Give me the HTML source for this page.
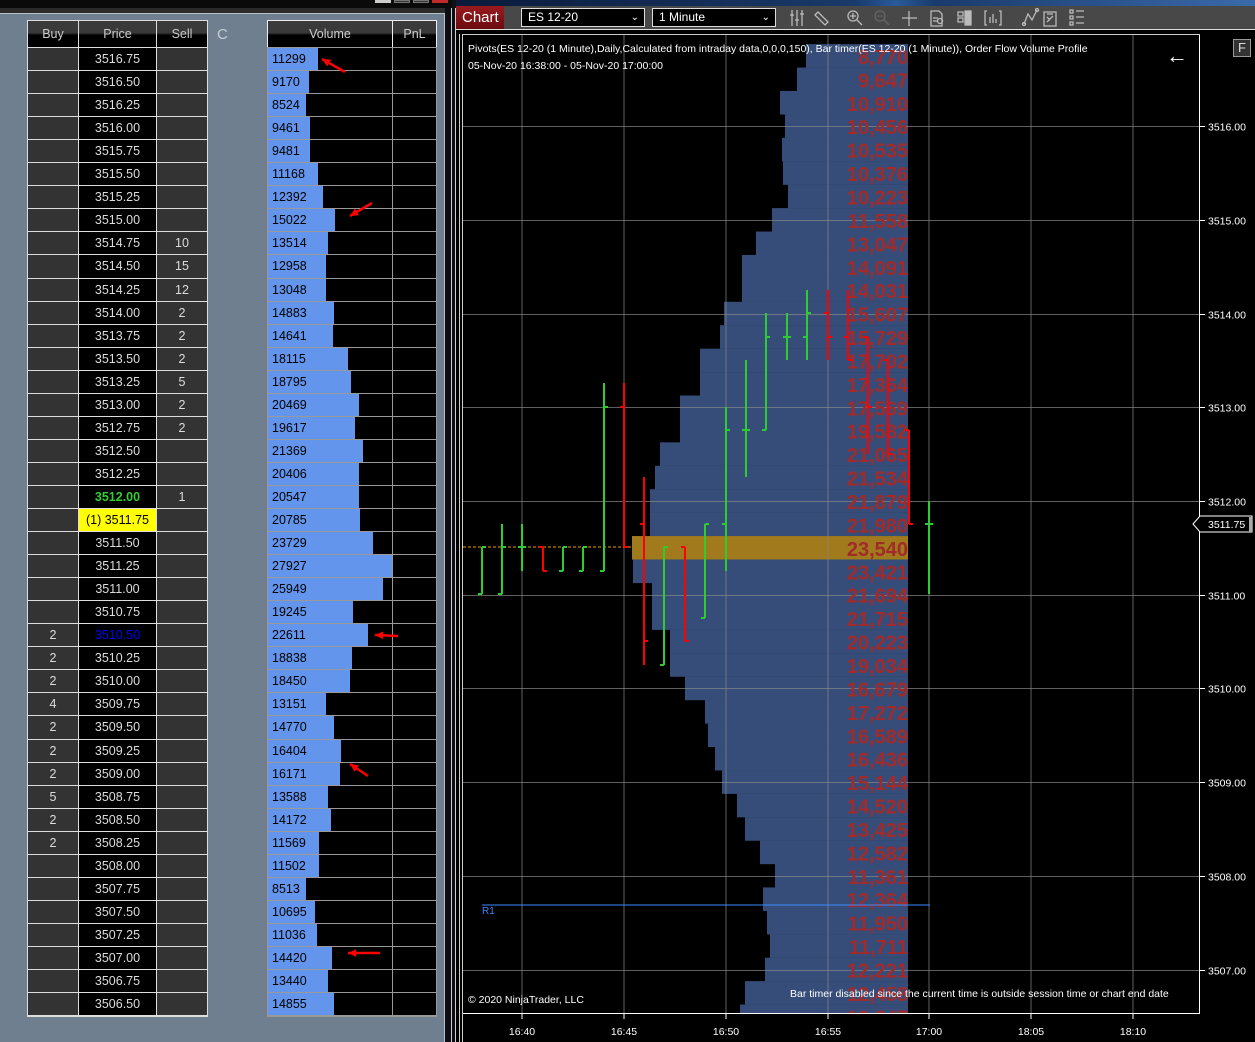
<!DOCTYPE html>
<html><head><meta charset="utf-8">
<style>
*{margin:0;padding:0;box-sizing:border-box}
body{width:1255px;height:1042px;overflow:hidden;background:#111;font-family:"Liberation Sans",Arial,sans-serif;position:relative}
.a{position:absolute}
.cell{position:absolute;font-size:12.5px;text-align:center;line-height:22px;color:#ddd}
</style></head><body>
<div class="a" style="left:0;top:0;width:452px;height:8px;background:#0a0a0a"></div>
<div class="a" style="left:375px;top:0;width:16px;height:3px;background:#ccc"></div>
<div class="a" style="left:394px;top:0;width:16px;height:3px;background:#333;border:1px solid #777"></div>
<div class="a" style="left:413px;top:0;width:16px;height:3px;background:#333;border:1px solid #777"></div>
<div class="a" style="left:432px;top:0;width:16px;height:3px;background:#c0282a"></div>
<div class="a" style="left:0;top:8px;width:452px;height:5px;background:#2b2b2b"></div>
<div class="a" style="left:0;top:13px;width:445px;height:1029px;background:#6f7f8f;border-top:1px solid #b8c0c8;border-right:1px solid #b8c0c8"></div>
<div class="a" style="left:445px;top:8px;width:10px;height:1034px;background:#0d0d14"></div>
<div class="a" style="left:451px;top:8px;width:1px;height:1034px;background:#ccc"></div>
<div class="a" style="left:455px;top:8px;width:1px;height:1034px;background:#ccc"></div>
<div class="a" style="left:217px;top:26px;font-size:15px;color:#c8ced4">C</div>
<div id="dom"></div>
<div class="a" style="left:456px;top:0;width:799px;height:6px;background:linear-gradient(90deg,#0a1a3a,#1a3a6a 50%,#2a5a9a 55%,#1a3a6a 60%,#3a6aaa)"></div>
<div class="a" style="left:456px;top:6px;width:799px;height:24px;background:#484848"></div>
<div class="a" style="left:456px;top:29px;width:799px;height:1px;background:#ddd"></div>
<div class="a" style="left:456px;top:6px;width:48px;height:23px;background:linear-gradient(#9a1a1e,#6a0c10);color:#fff;font-size:15px;line-height:23px;padding-left:6px">Chart</div>
<div class="a" style="left:521px;top:8px;width:124px;height:19px;border:1px solid #ddd;background:#000;color:#fff;font-size:12px;line-height:17px;padding-left:6px">ES 12-20<span style="position:absolute;right:5px;font-size:10px">&#8964;</span></div>
<div class="a" style="left:652px;top:8px;width:124px;height:19px;border:1px solid #ddd;background:#000;color:#fff;font-size:12px;line-height:17px;padding-left:6px">1 Minute<span style="position:absolute;right:5px;font-size:10px">&#8964;</span></div>
<svg class="a" style="left:780px;top:6px" width="320" height="24" fill="none" stroke="#bbb" stroke-width="1.3">
<path d="M12 4v16M17 4v16M22 4v16M10 9h4M15 14h4M20 8h4"/>
<path d="M38 6l10 10-3 3-10-10z M35 9l3-3"/>
<circle cx="73" cy="10" r="5"/><path d="M70 10h6M73 7v6M77 14l5 5"/>
<g stroke="#666"><circle cx="100" cy="10" r="5"/><path d="M97 10h6M104 14l5 5"/></g>
<path d="M129 5v15M122 12h15"/>
<path d="M151 5h8l3 3v12h-11z M153 12h5M153 15h4"/><circle cx="160" cy="15" r="2.5"/>
<path d="M178 6h5v4h-5zM178 12h5v4h-5z"/><rect x="185" y="5" width="6" height="14" fill="#bbb"/>
<path d="M207 5h-2v14h2M219 5h2v14h-2M210 17v-6M213 17v-9M216 17v-4"/>
<path d="M244 18l4-10 4 6 5-10"/><circle cx="244" cy="18" r="1.5"/><circle cx="257" cy="4" r="1.5"/>
<path d="M264 6h12v14h-12zM267 8h6M267 16l6-6M267 11l3 3"/>
<path d="M290 4h3v3h-3zM290 10h3v3h-3zM290 16h3v3h-3zM296 5h8M296 11h8M296 17h8"/>
</svg>
<div class="a" style="left:456px;top:30px;width:799px;height:1012px;background:#000"></div>
<div class="a" style="left:459px;top:34px;width:1px;height:1008px;background:#ccc"></div>
<div class="a" style="left:462px;top:34px;width:1px;height:1008px;background:#ccc"></div>
<div class="a" style="left:462px;top:34px;width:738px;height:1px;background:#ccc"></div>
<svg class="a" id="ch" style="left:0;top:0" width="1255" height="1042"></svg>
<div class="a" style="left:468px;top:41px;color:#fff;font-size:10.5px;line-height:17px;white-space:nowrap">Pivots(ES 12-20 (1 Minute),Daily,Calculated from intraday data,0,0,0,150), Bar timer(ES 12-20 (1 Minute)), Order Flow Volume Profile<br>05-Nov-20 16:38:00 - 05-Nov-20 17:00:00</div>
<div class="a" style="left:1166px;top:42px;color:#fff;font-size:22px;line-height:28px">&#8592;</div>
<div class="a" style="left:1233px;top:39px;width:18px;height:18px;border:1px solid #999;background:#333;color:#ddd;font-size:13px;text-align:center;line-height:16px">F</div>
<div class="a" style="left:482px;top:906px;color:#3a8aff;font-size:10px">R1</div>
<div class="a" style="left:468px;top:994px;color:#fff;font-size:10.5px">© 2020 NinjaTrader, LLC</div>
<div class="a" style="left:790px;top:988px;color:#fff;font-size:10.5px;white-space:nowrap">Bar timer disabled since the current time is outside session time or chart end date</div>
<script>
var vols=[11299,9170,8524,9461,9481,11168,12392,15022,13514,12958,13048,14883,14641,18115,18795,20469,19617,21369,20406,20547,20785,23729,27927,25949,19245,22611,18838,18450,13151,14770,16404,16171,13588,14172,11569,11502,8513,10695,11036,14420,13440,14855];
var sell={"3514.75":10,"3514.50":15,"3514.25":12,"3514.00":2,"3513.75":2,"3513.50":2,"3513.25":5,"3513.00":2,"3512.75":2,"3512.00":1};
var buy={"3510.50":2,"3510.25":2,"3510.00":2,"3509.75":4,"3509.50":2,"3509.25":2,"3509.00":2,"3508.75":5,"3508.50":2,"3508.25":2};
var h='';
function d(l,t,w,hh,bg,txt,st){h+='<div class="cell" style="left:'+l+'px;top:'+t+'px;width:'+w+'px;height:'+hh+'px;background:'+bg+';'+(st||'')+'">'+(txt||'')+'</div>';}
var hg='linear-gradient(#3a3a3a 0,#3a3a3a 45%,#000 55%)';
h+='<div class="a" style="left:27px;top:20px;width:181px;height:997px;background:#ddd"></div>';
h+='<div class="a" style="left:267px;top:20px;width:170px;height:997px;background:#999"></div>';
h+='<div class="a" style="left:267px;top:20px;width:170px;height:27px;background:#eee"></div>';
d(28,21,50,26,hg,'Buy','line-height:26px;color:#ccc');d(79,21,77,26,hg,'Price','line-height:26px;color:#ccc');d(157,21,50,26,hg,'Sell','line-height:26px;color:#ccc');
d(268,21,124,26,hg,'Volume','line-height:26px;color:#ccc');d(393,21,43,26,hg,'PnL','line-height:26px;color:#ccc');
for(var i=0;i<42;i++){var p=(3516.75-i*0.25).toFixed(2);var t=Math.round(48+i*23.05);var hh=Math.round(48+(i+1)*23.05)-t-1;
 d(28,t,50,hh,'#333',buy[p]||'');
 var bg='#000',st='',tx=p;
 if(p=='3512.00')st='color:#3c3;font-weight:bold';
 if(p=='3511.75'){bg='#ff0';st='color:#000';tx='(1) 3511.75';}
 if(p=='3510.50')st='color:#00f';
 d(79,t,77,hh,bg,tx,st);
 d(157,t,50,hh,'#333',sell[p]||'');
 d(268,t,124,hh,'#000','');
 var w=Math.round(vols[i]/27927*124);
 d(268,t,w,hh,'#6495ed',vols[i],'text-align:left;padding-left:4px;color:#000');
 d(393,t,43,hh,'#000','');
}
document.getElementById('dom').innerHTML=h;
var s='';
var C=document.getElementById('ch');
function arrow(x1,y1,x2,y2){var a=Math.atan2(y2-y1,x2-x1),L=9;
 s+='<line x1="'+x1+'" y1="'+y1+'" x2="'+x2+'" y2="'+y2+'" stroke="#f00" stroke-width="2.5"/>';
 s+='<polygon fill="#f00" points="'+x2+','+y2+' '+(x2-L*Math.cos(a-0.45))+','+(y2-L*Math.sin(a-0.45))+' '+(x2-L*Math.cos(a+0.45))+','+(y2-L*Math.sin(a+0.45))+'"/>';}
function Y(p){return 501-(p-3512)*93.7;}
var pv=[8770,9647,10910,10456,10535,10376,10223,11558,13047,14091,14031,15607,15729,17702,17364,17569,19582,21065,21534,21879,21980,23540,23421,21694,21715,20223,19034,16679,17272,16589,16436,15144,14520,13425,12582,11361,12364,11950,11711,12221,12458,10847];
var lx=[806,797,780,785,782,783,788,772,756,742,742,724,720,700,700,680,680,660,655,650,650,632,633,652,652,670,670,685,705,708,715,722,737,745,760,775,763,767,770,765,745,740];
s+='<defs><clipPath id="cp"><rect x="463" y="35" width="736" height="978"/></clipPath></defs><g clip-path="url(#cp)">';
for(i=0;i<42;i++){var y=Y(3516.75-i*0.25);
 s+='<rect x="'+lx[i]+'" y="'+(y-11.8)+'" width="'+(908-lx[i])+'" height="23.6" fill="'+(i==21?'#a07a1c':'#354d78')+'"/>';}
var gx=[522,624,726,828,929,1031,1133];
gx.forEach(function(x){s+='<line x1="'+x+'" y1="35" x2="'+x+'" y2="1013" stroke="#888" stroke-opacity=".7" stroke-width="1"/>';});
for(var p=3507;p<=3516;p++){var y=Math.round(Y(p))+.5;s+='<line x1="463" y1="'+y+'" x2="1199" y2="'+y+'" stroke="#888" stroke-opacity=".7"/>';}
for(i=0;i<42;i++){var y=Y(3516.75-i*0.25);
 s+='<text x="908" y="'+(y+8)+'" text-anchor="end" font-family="Liberation Sans" font-weight="bold" font-size="20" fill="#a12a2a">'+pv[i].toLocaleString('en-US')+'</text>';}
s+='<line x1="463" y1="547" x2="632" y2="547" stroke="#e89a10" stroke-dasharray="3,2"/>';
s+='<line x1="482" y1="905" x2="930" y2="905" stroke="#3a8aff"/>';
var bars=[[482,547,594,594,547,'g'],[502,524,594,594,547,'g'],[522,524,571,547,547,'g'],[543,547,571,547,571,'r'],[563,547,571,571,547,'g'],[583,547,571,571,547,'g'],[604,383,571,571,407,'g'],[624,383,547,407,547,'r'],[644,477,665,524,641,'r'],[664,547,665,665,547,'g'],[685,547,641,547,641,'r'],[705,524,618,618,524,'g'],[726,407,571,524,430,'g'],[746,360,477,430,430,'g'],[766,313,430,430,337,'g'],[787,313,360,337,337,'g'],[807,290,360,337,313,'g'],[828,290,360,313,337,'r'],[848,290,360,337,360,'r'],[868,337,454,337,407,'r'],[888,360,454,360,454,'r'],[909,430,524,430,524,'r'],[929,501,594,524,524,'g']];
bars.forEach(function(b){var c=b[5]=='g'?'#2ecc2e':'#f00';
 s+='<line x1="'+b[0]+'" y1="'+b[1]+'" x2="'+b[0]+'" y2="'+b[2]+'" stroke="'+c+'" stroke-width="2"/>';
 s+='<line x1="'+(b[0]-4)+'" y1="'+b[3]+'" x2="'+b[0]+'" y2="'+b[3]+'" stroke="'+c+'" stroke-width="2"/>';
 s+='<line x1="'+b[0]+'" y1="'+b[4]+'" x2="'+(b[0]+4)+'" y2="'+b[4]+'" stroke="'+c+'" stroke-width="2"/>';});
s+='</g>';
s+='<line x1="463" y1="1013.5" x2="1200" y2="1013.5" stroke="#fff"/><line x1="1199.5" y1="35" x2="1199.5" y2="1014" stroke="#fff"/>';
var tl=['16:40','16:45','16:50','16:55','17:00','18:05','18:10'];
gx.forEach(function(x,k){s+='<line x1="'+x+'" y1="1014" x2="'+x+'" y2="1019" stroke="#fff"/><text x="'+x+'" y="1035" text-anchor="middle" font-family="Liberation Sans" font-size="10.5" fill="#fff">'+tl[k]+'</text>';});
for(p=3507;p<=3516;p++){var y=Math.round(Y(p))+.5;s+='<line x1="1200" y1="'+y+'" x2="1205" y2="'+y+'" stroke="#fff"/><text x="1208" y="'+(y+4)+'" font-family="Liberation Sans" font-size="10.5" fill="#fff">'+p+'.00</text>';}
s+='<polygon points="1193,524 1200,516 1252,516 1252,532 1200,532" fill="#000" stroke="#fff"/><rect x="1249" y="517" width="3" height="15" fill="#aaa"/><text x="1208" y="528" font-family="Liberation Sans" font-size="10.5" fill="#fff">3511.75</text>';
arrow(345,72,322,59);arrow(372,203,350,216);arrow(398,636,375,635);arrow(368,776,350,764);arrow(380,953,348,953);
C.innerHTML=s;
</script>
</body></html>
